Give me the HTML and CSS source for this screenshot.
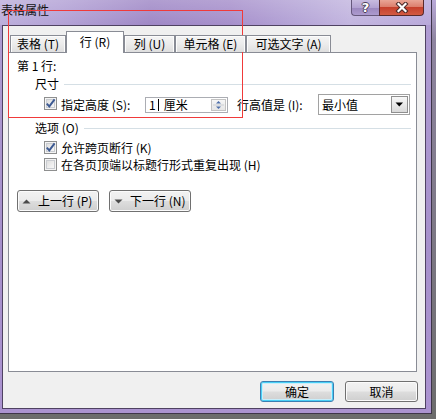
FILE: index.html
```html
<!DOCTYPE html>
<html lang="zh-CN">
<head>
<meta charset="utf-8">
<title>表格属性</title>
<link rel="stylesheet" href="styles.css">
</head>
<body>
<div class="window">
  <div class="titlebar">
    <span class="title">表格属性</span>
    <div class="caption">
      <span class="cap-btn help">?</span>
      <span class="cap-btn close">
        <svg width="14" height="11" viewBox="0 0 14 11"><path d="M3.5 2 L10.5 9 M10.5 2 L3.5 9" stroke="#4a2a2a" stroke-width="4.2" stroke-linecap="square"/><path d="M3.5 2 L10.5 9 M10.5 2 L3.5 9" stroke="#fff" stroke-width="2.2" stroke-linecap="square"/></svg>
      </span>
    </div>
  </div>
  <div class="client">
    <div class="tabs">
      <div class="tab t-table">表格 (T)</div>
      <div class="tab active t-row">行 (R)</div>
      <div class="tab t-col">列 (U)</div>
      <div class="tab t-cell">单元格 (E)</div>
      <div class="tab t-alt">可选文字 (A)</div>
    </div>
    <div class="panel">
      <div class="row-no">第 1 行:</div>
      <div class="group size"><span>尺寸</span><span class="rule"></span></div>
      <div class="size-row">
        <span class="cb checked"><svg width="11" height="11" viewBox="0 0 11 11"><path d="M1.8 5.6 L4.3 8.4 L9.6 1.4" fill="none" stroke="#3d5a93" stroke-width="1.9"/></svg></span>
        <span class="lbl-h">指定高度 (S):</span>
        <span class="spinner"><span class="spin-val">1</span><span class="caret"></span><span class="spin-unit">厘米</span>
          <span class="spin-btn"><svg width="13" height="12" viewBox="0 0 13 12"><path d="M4 4.5 L6.5 2 L9 4.5Z" fill="#4d6ea9"/><path d="M1 6 H12" stroke="#c9cdd3" stroke-width="1"/><path d="M4 7.5 L6.5 10 L9 7.5Z" fill="#4d6ea9"/></svg></span>
        </span>
        <span class="lbl-v">行高值是 (I):</span>
        <span class="select"><span>最小值</span><span class="drop"><svg width="9" height="5" viewBox="0 0 9 5"><path d="M0.5 0.5 H8 L4.25 4.5Z" fill="#000"/></svg></span></span>
      </div>
      <div class="group opt"><span>选项 (O)</span><span class="rule"></span></div>
      <div class="check-row">
        <span class="cb checked"><svg width="11" height="11" viewBox="0 0 11 11"><path d="M1.8 5.6 L4.3 8.4 L9.6 1.4" fill="none" stroke="#3d5a93" stroke-width="1.9"/></svg></span>
        <span>允许跨页断行 (K)</span>
      </div>
      <div class="check-row">
        <span class="cb"></span>
        <span>在各页顶端以标题行形式重复出现 (H)</span>
      </div>
      <div class="nav">
        <span class="btn nav-btn"><svg width="9" height="5" viewBox="0 0 9 5"><path d="M0.5 4.5 H8.5 L4.5 0.5Z" fill="#4a4a4a"/></svg><span>上一行 (P)</span></span>
        <span class="btn nav-btn"><svg width="9" height="5" viewBox="0 0 9 5"><path d="M0.5 0.5 H8.5 L4.5 4.5Z" fill="#4a4a4a"/></svg><span>下一行 (N)</span></span>
      </div>
    </div>
    <div class="footer">
      <span class="btn ok">确定</span>
      <span class="btn cancel">取消</span>
    </div>
  </div>
</div>
<div class="annot"></div>
</body>
</html>
```
FILE: styles.css
```css
* { box-sizing: border-box; }
html, body { margin: 0; padding: 0; }
body {
  width: 436px;
  height: 419px;
  overflow: hidden;
  position: relative;
  background: linear-gradient(to bottom, #b9a9d8 0, #8e84a0 40px, #6c6c6c 100%);
  font-family: "Noto Sans CJK SC", "Noto Sans", sans-serif;
  font-size: 12px;
  color: #000;
}
.window {
  width: 432px;
  height: 414px;
  display: flex;
  flex-direction: column;
  padding: 0 5px 4px 2px;
  border-right: 1px solid #3e3549;
  border-bottom: 1px solid #3e3549;
  background: linear-gradient(to bottom, #b09dd3 0, #a690cb 60%, #ab93d0 100%);
}
.titlebar {
  height: 25px;
  flex: none;
  margin: 0 -5px 0 -2px;
  display: flex;
  justify-content: space-between;
  align-items: flex-start;
  padding-right: 7px;
  background:
    linear-gradient(to bottom, rgba(255,255,255,0.18) 0, rgba(255,255,255,0) 100%),
    linear-gradient(to right, #bcaedb 0, #b3a2d6 60px, #9f88c6 150px, #a68fcb 230px, #b5a5d7 300px, #c2b5df 350px, #b8a8da 432px);
}
.title {
  margin: 3px 0 0 1px;
  line-height: 14px;
  color: #111;
}
.caption { display: flex; }
.cap-btn {
  height: 16px;
  display: flex;
  align-items: center;
  justify-content: center;
}
.help {
  width: 28px;
  border: 1px solid #66587c;
  border-top: none;
  border-right: none;
  border-bottom-left-radius: 4px;
  background: linear-gradient(to bottom, #c8bbdf 0, #b3a2d2 50%, #9a86bd 51%, #ad9bcf 100%);
  color: #fff;
  font-family: "DejaVu Sans", sans-serif;
  font-weight: bold;
  font-size: 13px;
  line-height: 14px;
  text-shadow: -1px 0 #4c4058, 1px 0 #4c4058, 0 -1px #4c4058, 0 1px #4c4058;
}
.close {
  width: 45px;
  border: 1px solid #5a2a2a;
  border-top: none;
  border-bottom-right-radius: 4px;
  background: linear-gradient(to bottom, #e9a596 0, #dc7f6d 45%, #c6402c 50%, #d25a42 100%);
}
.client {
  flex: 1;
  display: flex;
  flex-direction: column;
  border: 1px solid #4f4262;
  background: #f0f0f0;
}
.tabs {
  display: flex;
  align-items: flex-end;
  height: 22px;
  margin: 5px 0 -1px 7px;
  position: relative;
  z-index: 1;
}
.tab {
  height: 17px;
  margin-bottom: 1px;
  border: 1px solid #898c95;
  border-bottom: none;
  background: linear-gradient(to bottom, #f5f5f5 0, #ececec 50%, #dedede 100%);
  box-shadow: inset 1px 1px 0 #fcfcfc, inset -1px 0 0 #fcfcfc;
  display: flex;
  align-items: center;
  justify-content: center;
  line-height: 14px;
  white-space: nowrap;
  flex: none;
}
.tab.active {
  height: 22px;
  margin-bottom: 0;
  background: #fff;
  box-shadow: none;
  padding-bottom: 2px;
}
.t-table { width: 56px; }
.t-row { width: 58px; }
.t-col { width: 51px; }
.t-cell { width: 71px; }
.t-alt { width: 85px; }
.panel {
  height: 320px;
  flex: none;
  margin: 0 8px 0 5px;
  border: 1px solid #898c95;
  background: #fff;
  padding: 6px 5px 0 8px;
}
.row-no { height: 14px; line-height: 14px; }
.group {
  display: flex;
  align-items: center;
  height: 14px;
  line-height: 14px;
  margin: 4px 0 0 18px;
}
.group.opt { margin-top: 6px; }
.rule {
  flex: 1;
  height: 1px;
  margin-left: 5px;
  background: #d5dfe5;
}
.size-row {
  display: flex;
  align-items: center;
  height: 21px;
  margin-top: 3px;
  padding-left: 27px;
  white-space: nowrap;
}
.cb {
  width: 13px;
  height: 13px;
  flex: none;
  border: 1px solid #8e8f8f;
  background: linear-gradient(135deg, #d6d6d6 0, #f0f0f0 60%, #fbfbfb 100%);
  box-shadow: inset 0 0 0 1px #f4f4f4, inset 0 0 0 2px #c9ccd1;
  display: flex;
  align-items: center;
  justify-content: center;
}
.size-row .cb { margin-bottom: 3px; }
.lbl-h { width: 84px; margin-left: 4px; }
.spinner {
  width: 83px;
  height: 16px;
  border: 1px solid #abadb3;
  display: flex;
  align-items: center;
  padding-left: 3px;
  line-height: 14px;
}
.caret {
  width: 1px;
  height: 12px;
  background: #000;
  margin: 0 5px 0 2px;
}
.spin-btn {
  margin-left: auto;
  margin-right: 1px;
  width: 15px;
  height: 12px;
  border: 1px solid #c3c3c3;
  background: linear-gradient(to bottom, #f6f6f6 0, #e6e6e6 100%);
  display: flex;
  align-items: center;
  justify-content: center;
}
.lbl-v { width: 81px; margin-left: 9px; }
.select {
  width: 92px;
  height: 21px;
  border: 1px solid #a2a2a2;
  display: flex;
  align-items: center;
  padding-left: 3px;
  line-height: 14px;
}
.drop {
  margin-left: auto;
  margin-right: 1px;
  width: 17px;
  height: 17px;
  border: 1px solid #8f8f8f;
  background: linear-gradient(to bottom, #f7f7f7 0, #e9e9e9 50%, #d9d9d9 100%);
  display: flex;
  align-items: center;
  justify-content: center;
}
.check-row {
  display: flex;
  align-items: center;
  gap: 4px;
  height: 17px;
  padding-left: 27px;
  line-height: 14px;
  white-space: nowrap;
}
.group.opt + .check-row { margin-top: 4px; }
.nav {
  display: flex;
  gap: 10px;
  margin-top: 17px;
}
.btn {
  border: 1px solid #707070;
  border-radius: 3px;
  background: linear-gradient(to bottom, #f2f2f2 0, #ebebeb 48%, #dddddd 52%, #cfcfcf 100%);
  box-shadow: inset 0 0 0 1px #fbfbfb;
  display: flex;
  align-items: center;
  line-height: 14px;
  white-space: nowrap;
}
.nav-btn {
  width: 82px;
  height: 22px;
  padding-left: 4px;
  gap: 7px;
}
.footer {
  display: flex;
  justify-content: flex-end;
  gap: 11px;
  margin-top: 9px;
  padding-right: 7px;
}
.footer .btn {
  height: 21px;
  justify-content: center;
}
.ok {
  width: 74px;
  border-color: #3c7fb1;
  box-shadow: inset 0 0 0 1px #48cff6, inset 0 0 0 2px #c8eefb;
}
.cancel { width: 73px; }
.annot {
  position: absolute;
  left: 8px;
  top: 10px;
  width: 235px;
  height: 108px;
  border: 1px solid #f03a3a;
}
```
